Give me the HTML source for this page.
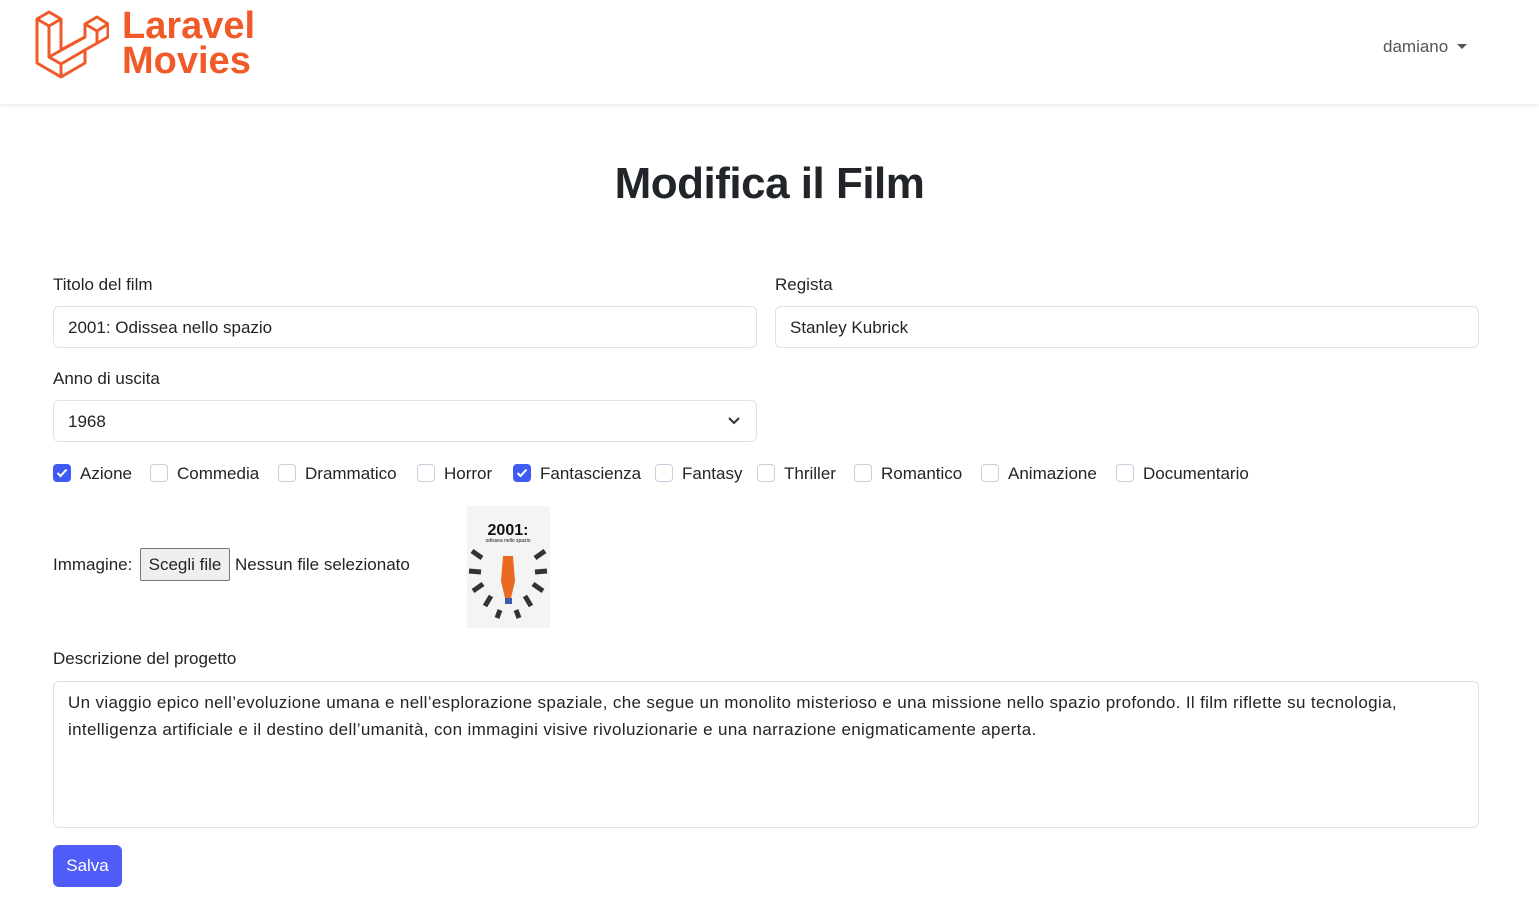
<!DOCTYPE html>
<html><head><meta charset="utf-8"><style>
*{box-sizing:border-box}
body{margin:0;background:#fff;font-family:"Liberation Sans",sans-serif;color:#212529;font-size:17px}
.nav{height:104px;box-shadow:0 2px 4px rgba(0,0,0,.08);position:relative}
.user{position:absolute;left:1383px;top:37px;color:#555;font-size:17px}
.user:after{content:"";display:inline-block;margin-left:9px;vertical-align:3px;border-top:5px solid #555;border-left:5px solid transparent;border-right:5px solid transparent}
h1{position:absolute;top:159px;left:0;width:1539px;text-align:center;margin:0;font-size:44px;font-weight:bold;color:#212529;letter-spacing:-0.5px}
.lbl{position:absolute;font-size:17px}
.inp{position:absolute;height:42px;border:1px solid #dee2e6;border-radius:6px;padding:1px 14px 0;line-height:40px;font-size:17px}
.cb{position:absolute;top:464px;width:18px;height:18px;border:1px solid #ccd;border-radius:4px;background:#fff}
.cb.on{background:#3e5cf4;border-color:#3e5cf4}
.cbl{position:absolute;top:464px;font-size:17px}
</style></head><body>
<div class="nav">
<svg style="position:absolute;left:35px;top:6px" width="74" height="73" viewBox="0 0 74 73" fill="none" stroke="#f05a28" stroke-width="3" stroke-linejoin="round">
<path d="M2 13 L14 6 L26 13 L26 44 L50 31 L50 18 L62 11 L73 18 L73 31 L50 44 L50 57 L26 71 L2 57 Z"/>
<path d="M2 13 L14 20 L26 13 M14 20 L14 51 L26 58 L26 71 M14 51 L50 31 M26 58 L50 44 M50 18 L62 25 L73 18 M62 25 L62 38"/>
</svg>
<div style="position:absolute;left:122px;top:9px;color:#f05a28;font-weight:bold;font-size:38px;line-height:35px;letter-spacing:0px">Laravel<br>Movies</div>
<div class="user">damiano</div>
</div>
<h1>Modifica il Film</h1>
<div class="lbl" style="left:53px;top:275px">Titolo del film</div>
<div class="lbl" style="left:775px;top:275px">Regista</div>
<div class="inp" style="left:53px;top:306px;width:704px">2001: Odissea nello spazio</div>
<div class="inp" style="left:775px;top:306px;width:704px">Stanley Kubrick</div>
<div class="lbl" style="left:53px;top:369px">Anno di uscita</div>
<div class="inp" style="left:53px;top:400px;width:704px">1968<svg style="position:absolute;right:16px;top:15px" width="12" height="9" viewBox="0 0 12 9"><path d="M1 2 L6 7 L11 2" stroke="#333" stroke-width="2" fill="none"/></svg></div>
<div class="cb on" style="left:53px"><svg width="16" height="16" viewBox="0 0 16 16"><path d="M3.5 8 L6.5 11 L12.5 4.5" stroke="#fff" stroke-width="2" fill="none"/></svg></div><div class="cbl" style="left:80px">Azione</div>
<div class="cb" style="left:150px"></div><div class="cbl" style="left:177px">Commedia</div>
<div class="cb" style="left:278px"></div><div class="cbl" style="left:305px">Drammatico</div>
<div class="cb" style="left:417px"></div><div class="cbl" style="left:444px">Horror</div>
<div class="cb on" style="left:513px"><svg width="16" height="16" viewBox="0 0 16 16"><path d="M3.5 8 L6.5 11 L12.5 4.5" stroke="#fff" stroke-width="2" fill="none"/></svg></div><div class="cbl" style="left:540px">Fantascienza</div>
<div class="cb" style="left:655px"></div><div class="cbl" style="left:682px">Fantasy</div>
<div class="cb" style="left:757px"></div><div class="cbl" style="left:784px">Thriller</div>
<div class="cb" style="left:854px"></div><div class="cbl" style="left:881px">Romantico</div>
<div class="cb" style="left:981px"></div><div class="cbl" style="left:1008px">Animazione</div>
<div class="cb" style="left:1116px"></div><div class="cbl" style="left:1143px">Documentario</div>
<div class="lbl" style="left:53px;top:555px">Immagine:</div>
<div style="position:absolute;left:140px;top:548px;width:90px;height:33px;border:1px solid #777;border-radius:2px;background:#efefef;font-size:17px;text-align:center;line-height:31px">Scegli file</div>
<div class="lbl" style="left:235px;top:555px">Nessun file selezionato</div>
<svg style="position:absolute;left:467px;top:506px" width="83" height="122" viewBox="0 0 83 122">
<rect width="83" height="122" fill="#f4f4f4"/>
<text x="41" y="29" text-anchor="middle" font-family="Liberation Sans" font-weight="bold" font-size="16" fill="#111">2001:</text>
<text x="41" y="36" text-anchor="middle" font-family="Liberation Sans" font-size="5" fill="#111">odissea nello spazio</text>
<g stroke="#333" stroke-width="5"><path d="M5 45 L15 52 M2 65 L14 66 M6 85 L16 78 M18 100 L24 90 M78 45 L68 52 M80 65 L68 66 M76 85 L66 78 M64 100 L58 90 M30 112 L33 104 M52 112 L49 104"/></g>
<path d="M36 50 L46 50 L48 75 L44 92 L38 92 L34 75 Z" fill="#e8691f"/>
<rect x="38" y="92" width="7" height="6" fill="#3b5bb0"/>
</svg>
<div class="lbl" style="left:53px;top:649px">Descrizione del progetto</div>
<div style="position:absolute;left:53px;top:681px;width:1426px;height:147px;border:1px solid #dee2e6;border-radius:6px;padding:7px 14px;font-size:17px;line-height:27px;letter-spacing:0.35px">Un viaggio epico nell’evoluzione umana e nell’esplorazione spaziale, che segue un monolito misterioso e una missione nello spazio profondo. Il film riflette su tecnologia, intelligenza artificiale e il destino dell’umanità, con immagini visive rivoluzionarie e una narrazione enigmaticamente aperta.</div>
<div style="position:absolute;left:53px;top:845px;width:69px;height:42px;background:#4f5cf7;border-radius:6px;color:#fff;text-align:center;line-height:42px;font-size:17px">Salva</div>
</body></html>
